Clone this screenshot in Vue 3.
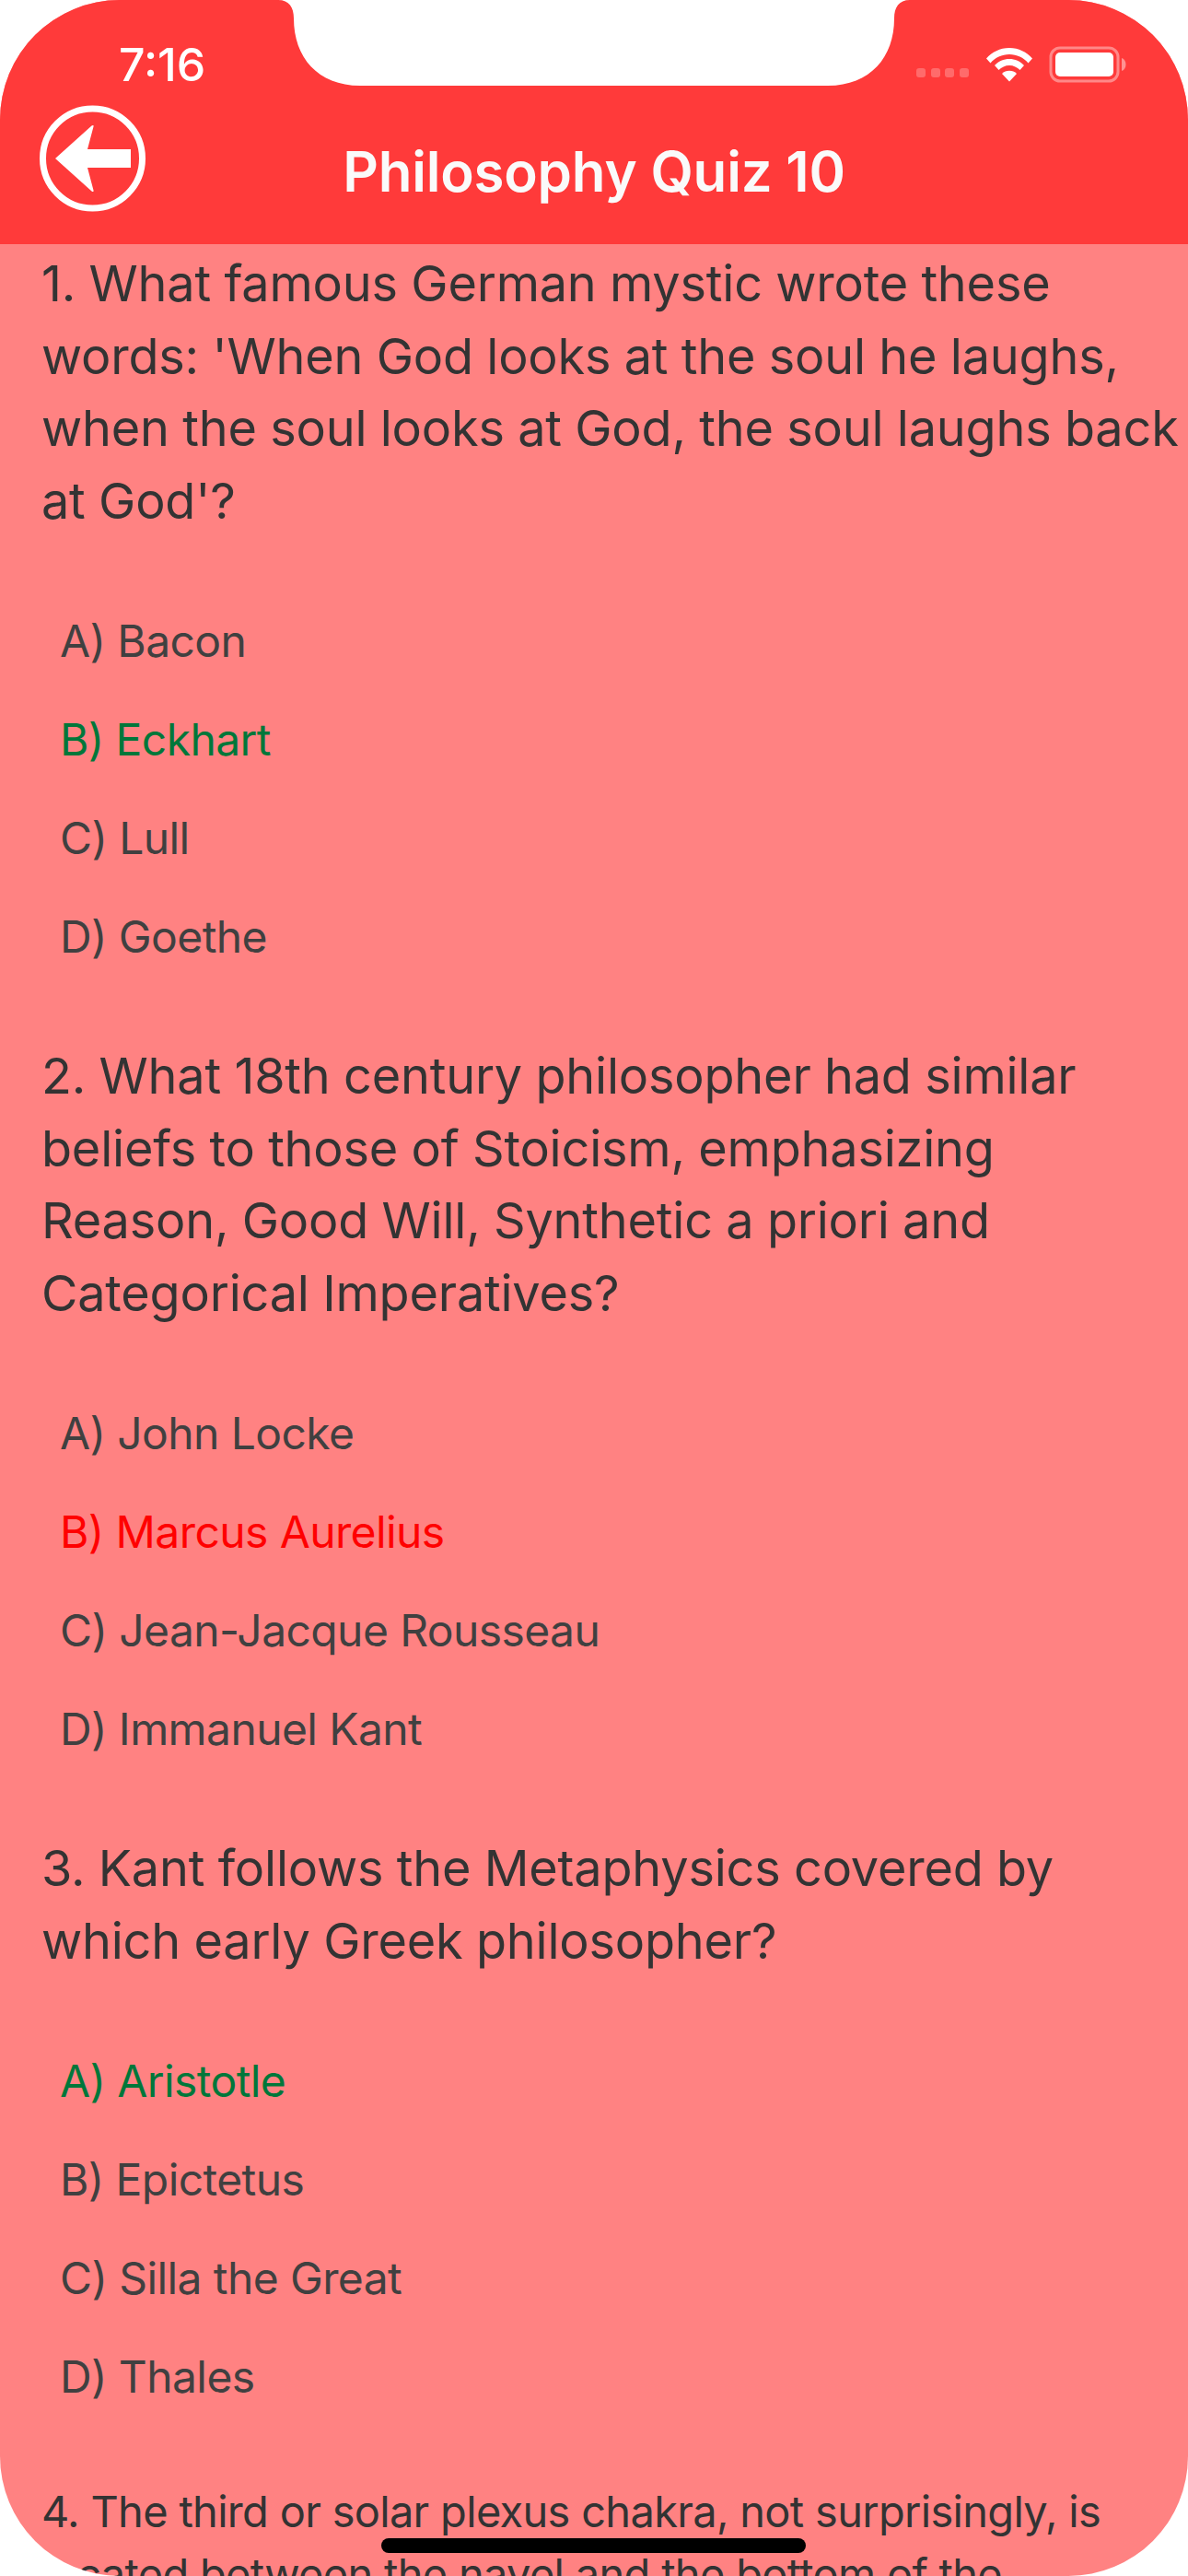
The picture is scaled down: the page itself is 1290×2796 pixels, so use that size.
<script setup>
const questions = [
  {
    text: "1. What famous German mystic wrote these words: 'When God looks at the soul he laughs, when the soul looks at God, the soul laughs back at God'?",
    options: [
      { label: 'A) Bacon' },
      { label: 'B) Eckhart', state: 'right' },
      { label: 'C) Lull' },
      { label: 'D) Goethe' },
    ],
  },
  {
    text: '2. What 18th century philosopher had similar beliefs to those of Stoicism, emphasizing Reason,\u00A0Good Will, Synthetic a priori and Categorical Imperatives?',
    options: [
      { label: 'A) John Locke' },
      { label: 'B) Marcus Aurelius', state: 'wrong' },
      { label: 'C) Jean-Jacque Rousseau' },
      { label: 'D) Immanuel Kant' },
    ],
  },
  {
    text: '3. Kant follows the Metaphysics covered by which early Greek philosopher?',
    options: [
      { label: 'A) Aristotle', state: 'right' },
      { label: 'B) Epictetus' },
      { label: 'C) Silla the Great' },
      { label: 'D) Thales' },
    ],
  },
  {
    text: '4. The third or solar plexus chakra, not surprisingly, is located between the navel and the bottom of the',
    small: true,
    options: [],
  },
]
</script>

<template>
  <div class="phone">
    <header class="head">
      <div class="status">
        <span class="time">7:16</span>
        <div class="indicators">
          <div class="dots"><i></i><i></i><i></i><i></i></div>
          <svg class="wifi" width="52" height="38" viewBox="0 0 52 38">
            <path d="M1 14.500C7 7.500 16 3 26 3s19 4.500 25 11.500l-4.500 5C41.500 13.500 34 10 26 10S10.500 13.500 5.500 19.500z" fill="#fff" transform="translate(0 -2)"/>
            <path d="M10 23C14 18.500 20 16 26 16s12 2.500 16 7l-4.500 5C34.500 25 30.500 23 26 23s-8.500 2-11.500 5z" fill="#fff" transform="translate(0 -3)"/>
            <path d="M18 29c2-2 5-3.200 8-3.200s6 1.200 8 3.200l-8 8.500z" fill="#fff"/>
          </svg>
          <svg class="battery" width="84" height="40" viewBox="0 0 84 40">
            <rect x="2" y="2" width="73" height="36" rx="10" fill="none" stroke="#fff" stroke-opacity=".4" stroke-width="3"/>
            <rect x="7" y="7" width="63" height="26" rx="5" fill="#fff"/>
            <path d="M79 13c3 1 4.500 4 4.500 7s-1.500 6-4.500 7z" fill="#fff" fill-opacity=".45"/>
          </svg>
        </div>
      </div>
      <div class="nav">
        <svg class="back" width="117" height="118" viewBox="0 0 117 118">
          <circle cx="58.500" cy="59" r="54" fill="none" stroke="#fff" stroke-width="7"/>
          <path d="M18 59 57.500 23.500c1.500-1 2.500-.5 2 1L53 49h47v20H53l6.500 24.500c.5 1.500-.5 2-2 1z" fill="#fff"/>
        </svg>
        <h1 class="title">Philosophy Quiz 10</h1>
      </div>
    </header>

    <main class="list">
      <section v-for="q in questions" :key="q.text" class="item">
        <p class="question" :class="{ small: q.small }">{{ q.text }}</p>
        <ul v-if="q.options.length" class="options">
          <li v-for="o in q.options" :key="o.label" class="option" :class="o.state">{{ o.label }}</li>
        </ul>
      </section>
    </main>

    <svg class="notch" width="1290" height="94" viewBox="0 0 1290 94">
      <path d="M302 0C314 0 319 8 319 20 319 62 345 93 391 93H899C945 93 971 62 971 20 971 8 976 0 988 0Z" fill="#fff"/>
    </svg>
    <div class="home"></div>
  </div>
</template>

<style>
html, body { margin: 0; background: #fff; }
</style>

<style scoped>
.phone {
  position: relative;
  width: 1290px;
  height: 2796px;
  overflow: hidden;
  border-radius: 130px;
  background: #ff8282;
  font-family: Inter, "Liberation Sans", sans-serif;
}
.head {
  height: 265px;
  background: #ff3a3a;
  color: #fff;
}
.status {
  display: flex;
  justify-content: space-between;
  align-items: center;
  height: 60px;
  padding: 40px 67px 0 129px;
}
.time {
  font-size: 50px;
  font-weight: 500;
  line-height: 60px;
}
.indicators {
  display: flex;
  align-items: center;
}
.dots {
  display: flex;
  gap: 5.600px;
  margin: 18px 18px 0 0;
}
.dots i {
  width: 10px;
  height: 10px;
  border-radius: 3px;
  background: rgba(255, 255, 255, .25);
}
.wifi { margin-right: 17px; }
.nav {
  display: flex;
  align-items: flex-start;
  position: relative;
  padding: 13px 42px 0;
}
.title {
  position: absolute;
  left: 0;
  right: 0;
  top: 46px;
  margin: 0;
  text-align: center;
  font-size: 60px;
  font-weight: 600;
  letter-spacing: -0.2px;
  line-height: 80px;
  color: #fafafa;
}
.back { display: block; }
.list {
  padding: 4px 6px 0 45px;
}
.item { margin-bottom: 59px; }
.question {
  margin: 0 0 59px;
  font-size: 54px;
  line-height: 78.500px;
  letter-spacing: -0.2px;
  word-spacing: -0.5px;
  color: #333;
}
.question.small {
  font-size: 47px;
  line-height: 68px;
  letter-spacing: -0.7px;
  word-spacing: 0;
}
.options {
  margin: 0;
  padding: 0 0 0 20px;
  list-style: none;
}
.option {
  font-size: 48px;
  line-height: 107px;
  letter-spacing: -0.6px;
  color: #404040;
}
.option.right { color: #00773a; }
.option.wrong { color: #ff0000; }
.notch {
  position: absolute;
  left: 0;
  top: 0;
}
.home {
  position: absolute;
  left: 414px;
  top: 2755px;
  width: 461px;
  height: 16px;
  border-radius: 8px;
  background: #000;
}
</style>
